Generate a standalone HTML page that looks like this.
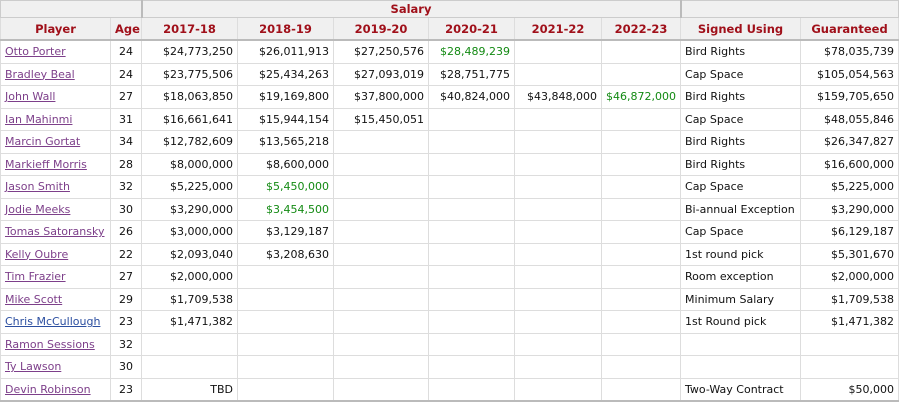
<!DOCTYPE html>
<html><head><style>
body{margin:0;background:#fff;width:900px;height:404px;overflow:hidden;font-family:"DejaVu Sans","Liberation Sans",sans-serif;font-size:11px;color:#111}
table{border-collapse:collapse;table-layout:fixed;width:898px;position:absolute;left:0;top:0}
td,th{border:1px solid #ddd;padding:0 4px;white-space:nowrap;overflow:hidden}
th{background:#f0f0f0;color:#a0101a;font-weight:bold;font-size:11.5px;height:21px}
tr.top th{height:16px;border-color:#ccc}
tr.top th.b{border-left:2px solid #bbb;border-right:2px solid #bbb}
tr.h th{border-bottom:2px solid #bbb}
td{height:21.5px}
td.r{text-align:right}
td.c{text-align:center}
a{color:#7d3f8a;text-decoration:underline}
a.b{color:#2b4ea0}
.g{color:#138a13}
tr.last td{border-bottom:2px solid #bbb}
</style></head><body>
<table>
<colgroup><col style="width:110px"><col style="width:31px"><col style="width:96px"><col style="width:96px"><col style="width:95px"><col style="width:86px"><col style="width:87px"><col style="width:79px"><col style="width:120px"><col style="width:98px"></colgroup>
<tr class="top"><th colspan="2"></th><th colspan="6" class="b">Salary</th><th colspan="2"></th></tr>
<tr class="h"><th>Player</th><th>Age</th><th>2017-18</th><th>2018-19</th><th>2019-20</th><th>2020-21</th><th>2021-22</th><th>2022-23</th><th>Signed Using</th><th>Guaranteed</th></tr>
<tr><td><a>Otto Porter</a></td><td class="c">24</td><td class="r">$24,773,250</td><td class="r">$26,011,913</td><td class="r">$27,250,576</td><td class="r g">$28,489,239</td><td></td><td></td><td>Bird Rights</td><td class="r">$78,035,739</td></tr>
<tr><td><a>Bradley Beal</a></td><td class="c">24</td><td class="r">$23,775,506</td><td class="r">$25,434,263</td><td class="r">$27,093,019</td><td class="r">$28,751,775</td><td></td><td></td><td>Cap Space</td><td class="r">$105,054,563</td></tr>
<tr><td><a>John Wall</a></td><td class="c">27</td><td class="r">$18,063,850</td><td class="r">$19,169,800</td><td class="r">$37,800,000</td><td class="r">$40,824,000</td><td class="r">$43,848,000</td><td class="r g">$46,872,000</td><td>Bird Rights</td><td class="r">$159,705,650</td></tr>
<tr><td><a>Ian Mahinmi</a></td><td class="c">31</td><td class="r">$16,661,641</td><td class="r">$15,944,154</td><td class="r">$15,450,051</td><td></td><td></td><td></td><td>Cap Space</td><td class="r">$48,055,846</td></tr>
<tr><td><a>Marcin Gortat</a></td><td class="c">34</td><td class="r">$12,782,609</td><td class="r">$13,565,218</td><td></td><td></td><td></td><td></td><td>Bird Rights</td><td class="r">$26,347,827</td></tr>
<tr><td><a>Markieff Morris</a></td><td class="c">28</td><td class="r">$8,000,000</td><td class="r">$8,600,000</td><td></td><td></td><td></td><td></td><td>Bird Rights</td><td class="r">$16,600,000</td></tr>
<tr><td><a>Jason Smith</a></td><td class="c">32</td><td class="r">$5,225,000</td><td class="r g">$5,450,000</td><td></td><td></td><td></td><td></td><td>Cap Space</td><td class="r">$5,225,000</td></tr>
<tr><td><a>Jodie Meeks</a></td><td class="c">30</td><td class="r">$3,290,000</td><td class="r g">$3,454,500</td><td></td><td></td><td></td><td></td><td>Bi-annual Exception</td><td class="r">$3,290,000</td></tr>
<tr><td><a>Tomas Satoransky</a></td><td class="c">26</td><td class="r">$3,000,000</td><td class="r">$3,129,187</td><td></td><td></td><td></td><td></td><td>Cap Space</td><td class="r">$6,129,187</td></tr>
<tr><td><a>Kelly Oubre</a></td><td class="c">22</td><td class="r">$2,093,040</td><td class="r">$3,208,630</td><td></td><td></td><td></td><td></td><td>1st round pick</td><td class="r">$5,301,670</td></tr>
<tr><td><a>Tim Frazier</a></td><td class="c">27</td><td class="r">$2,000,000</td><td></td><td></td><td></td><td></td><td></td><td>Room exception</td><td class="r">$2,000,000</td></tr>
<tr><td><a>Mike Scott</a></td><td class="c">29</td><td class="r">$1,709,538</td><td></td><td></td><td></td><td></td><td></td><td>Minimum Salary</td><td class="r">$1,709,538</td></tr>
<tr><td><a class="b">Chris McCullough</a></td><td class="c">23</td><td class="r">$1,471,382</td><td></td><td></td><td></td><td></td><td></td><td>1st Round pick</td><td class="r">$1,471,382</td></tr>
<tr><td><a>Ramon Sessions</a></td><td class="c">32</td><td></td><td></td><td></td><td></td><td></td><td></td><td></td><td></td></tr>
<tr><td><a>Ty Lawson</a></td><td class="c">30</td><td></td><td></td><td></td><td></td><td></td><td></td><td></td><td></td></tr>
<tr class="last"><td><a>Devin Robinson</a></td><td class="c">23</td><td class="r">TBD</td><td></td><td></td><td></td><td></td><td></td><td>Two-Way Contract</td><td class="r">$50,000</td></tr>
</table>
</body></html>
